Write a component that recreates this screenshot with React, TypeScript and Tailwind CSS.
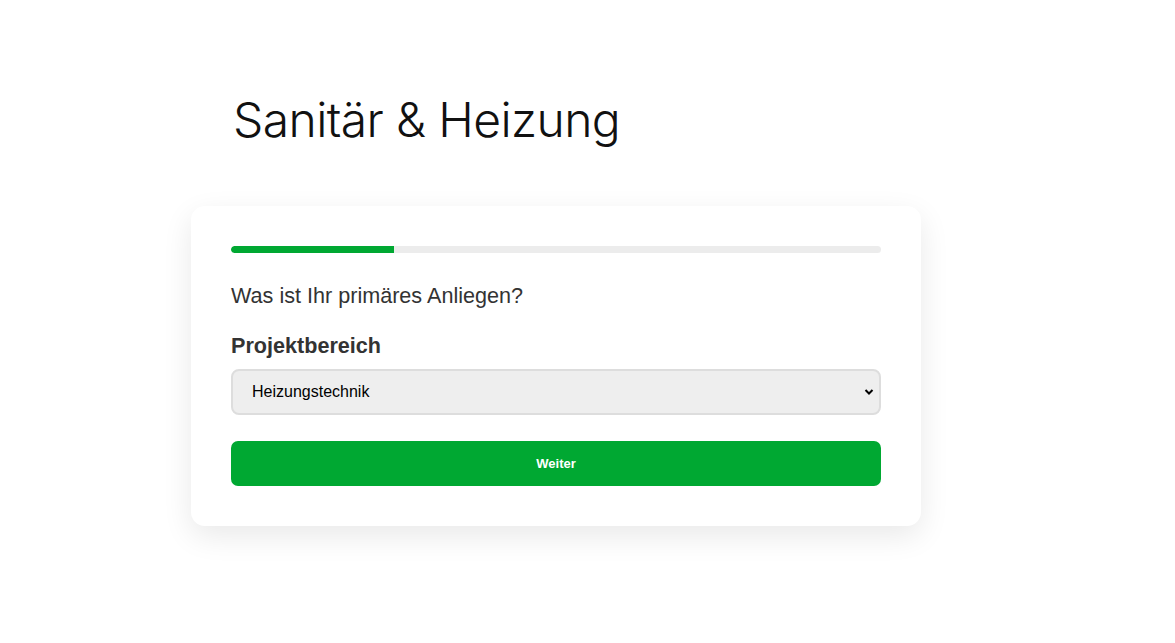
export default function App() {
  return (
    <div className="min-h-screen bg-white font-['Liberation_Sans',Arial,sans-serif]">
      <div className="w-[730px] ml-[191px] pt-[86px]">
        <h1 className="pl-[42px] font-['Inter',sans-serif] text-[48px] font-light leading-[68px] tracking-[-0.6px] text-[#111]">
          Sanitär &amp; Heizung
        </h1>
        <div className="mt-[52px] rounded-[14px] bg-white p-10 shadow-[0_10px_30px_rgba(0,0,0,0.09)]">
          <div className="h-[7px] w-full overflow-hidden rounded-full bg-[#ececec]">
            <div className="h-full w-1/4 rounded-l-full bg-[#00a832]" />
          </div>
          <p className="mt-[30px] text-[21.6px] leading-[26px] text-[#333]">Was ist Ihr primäres Anliegen?</p>
          <label className="mt-[24px] block text-[21.6px] font-bold leading-[26px] text-[#333]">Projektbereich</label>
          <div className="relative mt-[10px]">
            <select
              defaultValue="Heizungstechnik"
              className="h-[46px] w-full appearance-none rounded-[8px] border-2 border-[#ddd] bg-[#eee] pl-[19px] text-[16px] text-black outline-none"
            >
              <option>Sanitärinstallation</option>
              <option>Heizungstechnik</option>
              <option>Badsanierung</option>
            </select>
            <svg
              className="pointer-events-none absolute right-[7px] top-[19px]"
              width="10"
              height="8"
              viewBox="0 0 10 8"
            >
              <path d="M1.5 2l3.5 3.5L8.5 2" fill="none" stroke="#000" strokeWidth="2" />
            </svg>
          </div>
          <button
            type="button"
            className="mt-[26px] h-[45px] w-full rounded-[7px] bg-[#00a832] text-[13px] font-bold text-white"
          >
            Weiter
          </button>
        </div>
      </div>
    </div>
  );
}
